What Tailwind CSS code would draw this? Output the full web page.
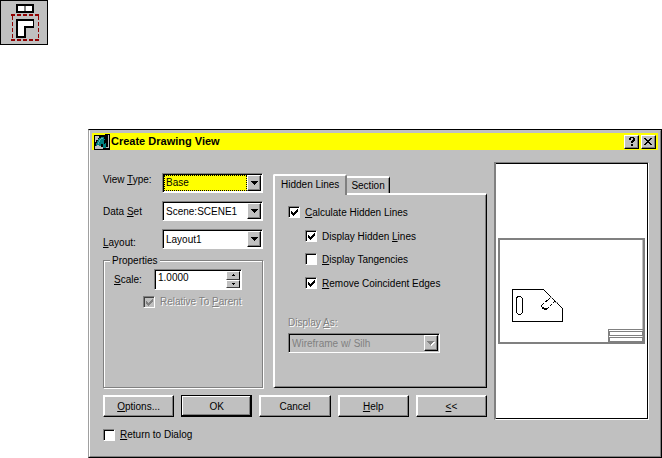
<!DOCTYPE html>
<html lang="en">
  <head>
    <meta charset="UTF-8">
    <meta name="viewport" content="width=device-width, initial-scale=1.0">
    <title>Create Drawing View</title>
    <script src="https://cdn.jsdelivr.net/npm/@tailwindcss/browser@4"></script>
  </head>
  <body class="bg-white text-black font-['Liberation_Sans',Arial,sans-serif] text-[10px] leading-[13px]">
    <!-- Toolbar button -->
    <button type="button" aria-label="Create drawing view" class="block w-12 h-[45px] bg-[#c0c0c0] border border-black">
      <svg viewBox="0 0 46 43" class="w-full h-full" shape-rendering="crispEdges" fill="none">
        <path d="M15 3H33V12H15Z" fill="#000"/>
        <path d="M17 5H24V10H17ZM25 5H31V10H25Z" fill="#fff"/>
        <path d="M23 5H25V10H23Z" fill="#808080"/>
        <path d="M10 14H38M10 39H38" stroke="#900000" stroke-width="2" stroke-dasharray="4 2"/>
        <path d="M11 15V40M37 15V40" stroke="#900000" stroke-width="1" stroke-dasharray="4 2"/>
        <path d="M15 18H33V27H25V37H15Z" fill="#000"/>
        <path d="M17 20H32V25H23V35H17Z" fill="#fff"/>
      </svg>
    </button>
    <!-- Dialog -->
    <main role="dialog" aria-labelledby="dialog-title" class="ml-22 mt-21 bg-[#c0c0c0] border border-t-black border-r-black border-b-black border-l-[#a0a0a0]">
      <div class="border border-t-[#c0c0c0] border-l-white border-r-[#808080] border-b-[#808080] px-0.5 pt-0.5">
        <header class="flex items-center h-[17px] bg-[#ffff00] pl-0.5 pr-0.5">
          <svg viewBox="0 0 16 16" class="w-4 h-4 mr-px" shape-rendering="crispEdges">
            <path d="M0 1H11V0H16V16H0Z" fill="#000"/>
            <path d="M1 2H5V4H4V6H2V8H1Z" fill="#c0c0c0"/>
            <path d="M2 12V9H3V7H4V5H5V4H7V3H10V5H11V9H12V14H9V12Z" fill="#008080"/>
            <path d="M7 4H9V5H7V6H6V8H5V10H4V8H5V6H6V5H7Z" fill="#60b0b0"/>
            <path d="M1 15V12H3V11H5V12H7V13H9V15Z" fill="#c0c0c0"/>
            <path d="M7 10H9V12H7ZM10 6H11V10H10Z" fill="#000"/>
            <path d="M14 1H15V14H12V13H14Z" fill="#c0c0c0"/>
          </svg>
          <h1 id="dialog-title" class="flex-1 text-[11px] font-bold">Create Drawing View</h1>
          <button type="button" aria-label="Help" class="w-[15px] h-3.5 bg-[#c0c0c0] border border-t-white border-l-white border-r-black border-b-black shadow-[inset_-1px_-1px_#808080] mr-0.5">
            <svg viewBox="0 0 13 12" class="w-full h-full" shape-rendering="crispEdges">
              <path d="M4 2H5V1H9V2H10V5H9V6H8V7H6V5H7V4H8V2H6V4H4ZM6 8H8V10H6Z"/>
            </svg>
          </button>
          <button type="button" aria-label="Close" class="w-[15px] h-3.5 bg-[#c0c0c0] border border-t-white border-l-white border-r-black border-b-black shadow-[inset_-1px_-1px_#808080]">
            <svg viewBox="0 0 13 12" class="w-full h-full" shape-rendering="crispEdges">
              <path d="M2 2H4V3H5V4H7V3H8V2H10V3H9V4H8V5H7V6H8V7H9V8H10V9H8V8H7V7H5V8H4V9H2V8H3V7H4V6H5V5H4V4H3V3H2Z"/>
            </svg>
          </button>
        </header>
        <div class="flex items-start gap-[7px] pl-[11px] pr-[9px] pt-3 pb-[15px]">
          <form class="flex-1 min-w-0 pt-[11px]">
            <div class="flex gap-2.5">
              <!-- Left column -->
              <div class="w-40 shrink-0 flex flex-col">
                <div class="flex flex-col gap-2">
                  <div class="flex">
                    <label for="view-type" class="w-[59px]">View <u>T</u>ype:</label>
                    <div class="relative flex-1">
                      <select id="view-type" class="appearance-none block w-full h-5 bg-white border border-t-[#808080] border-l-[#808080] border-r-white border-b-white shadow-[inset_1px_1px_#000] pl-[3px] pr-4">
                        <option>Base</option>
                      </select>
                      <span class="pointer-events-none absolute left-0.5 right-4 top-0.5 bottom-0.5 bg-[#ffff00] border border-dotted border-black pl-px leading-[14px]" aria-hidden="true">Base</span>
                      <span class="pointer-events-none absolute right-0.5 top-0.5 bottom-0.5 w-3.5 flex items-center justify-center bg-[#c0c0c0] border border-t-white border-l-white border-r-black border-b-black shadow-[inset_-1px_-1px_#808080]">
                        <svg viewBox="0 0 7 4" class="w-[7px] h-1" shape-rendering="crispEdges"><path d="M0 0H7V1H6V2H5V3H4V4H3V3H2V2H1V1H0Z"/></svg>
                      </span>
                    </div>
                  </div>
                  <div class="flex items-center">
                    <label for="data-set" class="w-[59px]">Data <u>S</u>et</label>
                    <div class="relative flex-1">
                      <select id="data-set" class="appearance-none block w-full h-5 bg-white border border-t-[#808080] border-l-[#808080] border-r-white border-b-white shadow-[inset_1px_1px_#000] pl-[3px] pr-4">
                        <option>Scene:SCENE1</option>
                      </select>
                      <span class="pointer-events-none absolute right-0.5 top-0.5 bottom-0.5 w-3.5 flex items-center justify-center bg-[#c0c0c0] border border-t-white border-l-white border-r-black border-b-black shadow-[inset_-1px_-1px_#808080]">
                        <svg viewBox="0 0 7 4" class="w-[7px] h-1" shape-rendering="crispEdges"><path d="M0 0H7V1H6V2H5V3H4V4H3V3H2V2H1V1H0Z"/></svg>
                      </span>
                    </div>
                  </div>
                  <div class="flex items-end">
                    <label for="layout" class="w-[59px]"><u>L</u>ayout:</label>
                    <div class="relative flex-1">
                      <select id="layout" class="appearance-none block w-full h-5 bg-white border border-t-[#808080] border-l-[#808080] border-r-white border-b-white shadow-[inset_1px_1px_#000] pl-[3px] pr-4">
                        <option>Layout1</option>
                      </select>
                      <span class="pointer-events-none absolute right-0.5 top-0.5 bottom-0.5 w-3.5 flex items-center justify-center bg-[#c0c0c0] border border-t-white border-l-white border-r-black border-b-black shadow-[inset_-1px_-1px_#808080]">
                        <svg viewBox="0 0 7 4" class="w-[7px] h-1" shape-rendering="crispEdges"><path d="M0 0H7V1H6V2H5V3H4V4H3V3H2V2H1V1H0Z"/></svg>
                      </span>
                    </div>
                  </div>
                </div>
                <fieldset class="flex-1 min-w-0 mt-[5px] border border-[#808080] shadow-[1px_1px_#fff,inset_1px_1px_#fff] pl-2.5 pr-5">
                  <legend class="-ml-1 px-0.5 bg-[#c0c0c0]">Properties</legend>
                  <div class="flex items-center mt-0.5">
                    <label for="scale" class="w-10"><u>S</u>cale:</label>
                    <div class="flex flex-1 min-w-0 h-[21px] bg-white border border-t-[#808080] border-l-[#808080] border-r-white border-b-white shadow-[inset_1px_1px_#000] p-px">
                      <input id="scale" type="text" value="1.0000" class="w-full min-w-0 flex-1 bg-transparent pl-0.5 pb-1">
                      <div class="w-3.5 shrink-0 flex flex-col">
                        <button type="button" aria-label="Increase scale" class="flex-1 flex items-center justify-center bg-[#c0c0c0] border border-t-white border-l-white border-r-black border-b-[#404040]">
                          <svg viewBox="0 0 3 2" class="w-[3px] h-0.5" shape-rendering="crispEdges"><path d="M1 0H2V1H3V2H0V1H1Z"/></svg>
                        </button>
                        <button type="button" aria-label="Decrease scale" class="flex-1 flex items-center justify-center bg-[#c0c0c0] border border-t-white border-l-white border-r-black border-b-[#404040]">
                          <svg viewBox="0 0 3 2" class="w-[3px] h-0.5" shape-rendering="crispEdges"><path d="M0 0H3V1H2V2H1V1H0Z"/></svg>
                        </button>
                      </div>
                    </div>
                  </div>
                  <label class="flex items-center gap-[5px] pl-[29px] mt-[5px] whitespace-nowrap text-[#808080] [text-shadow:1px_1px_#fff]">
                    <span class="relative w-3 h-3">
                      <input type="checkbox" checked disabled class="peer appearance-none block w-3 h-3 bg-[#c0c0c0] border border-t-[#808080] border-l-[#808080] border-r-white border-b-white shadow-[inset_1px_1px_#404040]">
                      <svg viewBox="0 0 7 7" class="hidden peer-checked:block pointer-events-none absolute left-[3px] top-[3px] w-[7px] h-[7px]" shape-rendering="crispEdges"><path d="M0 2H1V3H2V4H3V3H4V2H5V1H6V0H7V3H6V4H5V5H4V6H3V7H2V6H1V5H0Z" fill="#808080"/></svg>
                    </span>
                    <span>Relative To <u>P</u>arent</span>
                  </label>
                </fieldset>
              </div>
              <!-- Tabs -->
              <div class="flex-1 min-w-0 flex flex-col pt-px">
                <div role="tablist" class="flex items-end">
                  <button type="button" role="tab" aria-selected="true" class="relative z-10 -mb-0.5 h-[21px] px-1.5 pb-0.5 whitespace-nowrap bg-[#c0c0c0] border-t-2 border-l-2 border-r-2 border-t-white border-l-white border-r-[#808080] rounded-t-xs">Hidden Lines</button>
                  <button type="button" role="tab" aria-selected="false" class="h-[17px] px-1 whitespace-nowrap border-t-2 border-r border-t-white border-r-black shadow-[inset_-1px_0_#808080] rounded-tr-xs">Section</button>
                </div>
                <div role="tabpanel" class="h-[195px] border-t-2 border-l-2 border-r border-b border-t-white border-l-white border-r-black border-b-black shadow-[inset_-1px_-1px_#808080] pl-[13px] pt-2.5">
                  <div class="flex flex-col gap-[11px]">
                    <label class="flex items-center gap-[5px] h-3.5">
                      <span class="relative w-3 h-3">
                        <input type="checkbox" checked class="peer appearance-none block w-3 h-3 bg-white border border-t-[#808080] border-l-[#808080] border-r-white border-b-white shadow-[inset_1px_1px_#000]">
                        <svg viewBox="0 0 7 7" class="hidden peer-checked:block pointer-events-none absolute left-[3px] top-[3px] w-[7px] h-[7px]" shape-rendering="crispEdges"><path d="M0 2H1V3H2V4H3V3H4V2H5V1H6V0H7V3H6V4H5V5H4V6H3V7H2V6H1V5H0Z"/></svg>
                      </span>
                      <span><u>C</u>alculate Hidden Lines</span>
                    </label>
                    <label class="flex items-center gap-[5px] h-3 pl-[17px]">
                      <span class="relative w-3 h-3">
                        <input type="checkbox" checked class="peer appearance-none block w-3 h-3 bg-white border border-t-[#808080] border-l-[#808080] border-r-white border-b-white shadow-[inset_1px_1px_#000]">
                        <svg viewBox="0 0 7 7" class="hidden peer-checked:block pointer-events-none absolute left-[3px] top-[3px] w-[7px] h-[7px]" shape-rendering="crispEdges"><path d="M0 2H1V3H2V4H3V3H4V2H5V1H6V0H7V3H6V4H5V5H4V6H3V7H2V6H1V5H0Z"/></svg>
                      </span>
                      <span>Display Hidden <u>L</u>ines</span>
                    </label>
                    <label class="flex items-center gap-[5px] h-3 pl-[17px]">
                      <span class="relative w-3 h-3">
                        <input type="checkbox" class="peer appearance-none block w-3 h-3 bg-white border border-t-[#808080] border-l-[#808080] border-r-white border-b-white shadow-[inset_1px_1px_#000]">
                        <svg viewBox="0 0 7 7" class="hidden peer-checked:block pointer-events-none absolute left-[3px] top-[3px] w-[7px] h-[7px]" shape-rendering="crispEdges"><path d="M0 2H1V3H2V4H3V3H4V2H5V1H6V0H7V3H6V4H5V5H4V6H3V7H2V6H1V5H0Z"/></svg>
                      </span>
                      <span><u>D</u>isplay Tangencies</span>
                    </label>
                    <label class="flex items-center gap-[5px] h-3.5 pl-[17px]">
                      <span class="relative w-3 h-3">
                        <input type="checkbox" checked class="peer appearance-none block w-3 h-3 bg-white border border-t-[#808080] border-l-[#808080] border-r-white border-b-white shadow-[inset_1px_1px_#000]">
                        <svg viewBox="0 0 7 7" class="hidden peer-checked:block pointer-events-none absolute left-[3px] top-[3px] w-[7px] h-[7px]" shape-rendering="crispEdges"><path d="M0 2H1V3H2V4H3V3H4V2H5V1H6V0H7V3H6V4H5V5H4V6H3V7H2V6H1V5H0Z"/></svg>
                      </span>
                      <span><u>R</u>emove Coincident Edges</span>
                    </label>
                  </div>
                  <label for="display-as" class="block mt-[26px] text-[#808080] [text-shadow:1px_1px_#fff]">Display <u>A</u>s:</label>
                  <div class="relative w-38 mt-1">
                    <select id="display-as" disabled class="appearance-none block w-full h-5 bg-[#c0c0c0] text-[#808080] opacity-100 border border-t-[#808080] border-l-[#808080] border-r-white border-b-white shadow-[inset_1px_1px_#000] pl-[3px] pr-4">
                      <option>Wireframe w/ Silh</option>
                    </select>
                    <span class="pointer-events-none absolute right-0.5 top-0.5 bottom-0.5 w-3.5 flex items-center justify-center bg-[#c0c0c0] border border-t-white border-l-white border-r-black border-b-black shadow-[inset_-1px_-1px_#808080]">
                      <svg viewBox="0 0 8 5" class="w-2 h-[5px]" shape-rendering="crispEdges">
                        <path d="M1 1H8V2H7V3H6V4H5V5H4V4H3V3H2V2H1Z" fill="#fff"/>
                        <path d="M0 0H7V1H6V2H5V3H4V4H3V3H2V2H1V1H0Z" fill="#808080"/>
                      </svg>
                    </span>
                  </div>
                </div>
              </div>
            </div>
            <!-- Buttons -->
            <div class="grid grid-cols-5 gap-[7px] mt-[7px]">
              <button type="button" class="h-[22px] border border-t-white border-l-white border-r-black border-b-black shadow-[inset_-1px_-1px_#808080,inset_1px_1px_#fff]"><u>O</u>ptions...</button>
              <button type="submit" class="h-[22px] border border-black shadow-[inset_-1px_-1px_#000,inset_1px_1px_#fff,inset_-2px_-2px_#808080]">OK</button>
              <button type="button" class="h-[22px] border border-t-white border-l-white border-r-black border-b-black shadow-[inset_-1px_-1px_#808080,inset_1px_1px_#fff]">Cancel</button>
              <button type="button" class="h-[22px] border border-t-white border-l-white border-r-black border-b-black shadow-[inset_-1px_-1px_#808080,inset_1px_1px_#fff]"><u>H</u>elp</button>
              <button type="button" class="h-[22px] border border-t-white border-l-white border-r-black border-b-black shadow-[inset_-1px_-1px_#808080,inset_1px_1px_#fff]"><u>&lt;</u>&lt;</button>
            </div>
            <label class="flex items-center gap-[5px] mt-[11px]">
              <span class="relative w-3 h-3">
                <input type="checkbox" class="peer appearance-none block w-3 h-3 bg-white border border-t-[#808080] border-l-[#808080] border-r-white border-b-white shadow-[inset_1px_1px_#000]">
                <svg viewBox="0 0 7 7" class="hidden peer-checked:block pointer-events-none absolute left-[3px] top-[3px] w-[7px] h-[7px]" shape-rendering="crispEdges"><path d="M0 2H1V3H2V4H3V3H4V2H5V1H6V0H7V3H6V4H5V5H4V6H3V7H2V6H1V5H0Z"/></svg>
              </span>
              <span><u>R</u>eturn to Dialog</span>
            </label>
          </form>
          <!-- Preview -->
          <div class="w-[155px] bg-white border-t border-l-2 border-r border-b border-t-[#808080] border-l-[#808080] border-r-white border-b-white">
            <svg viewBox="0 0 152 256" class="block w-full" shape-rendering="crispEdges" fill="none">
              <path d="M0 0.5H151.5V255.5H0" stroke="#000"/>
              <path d="M3 76H148V180H3Z" stroke="#808080" stroke-width="2"/>
              <path d="M146.5 77V179" stroke="#c0c0c0"/>
              <path d="M112.5 179V166.5H147M113.5 168.5H146.5V172.5H113.5ZM113.5 174.5H146.5V178.5H113.5Z" stroke="#808080"/>
              <path d="M16.5 126.5H47.5L66.5 145.5V158.5H16.5Z" stroke="#000"/>
              <path d="M21.5 133.5H24.5L26.5 135.5V149.5L24.5 151.5H22.5L20.5 149.5V135.5Z" stroke="#000"/>
              <path d="M54.5 134.5L45.5 142.5L46.5 145.5L50.5 146.5L58.5 138.5" stroke="#000" stroke-dasharray="3 1"/>
              <path d="M46 144H48V146H46ZM49 145H51V147H49Z" fill="#000"/>
              <path d="M54 134H56V135H54ZM59 139H62V140H59Z" fill="#a0a0a0"/>
            </svg>
          </div>
        </div>
      </div>
    </main>
  </body>
</html>
